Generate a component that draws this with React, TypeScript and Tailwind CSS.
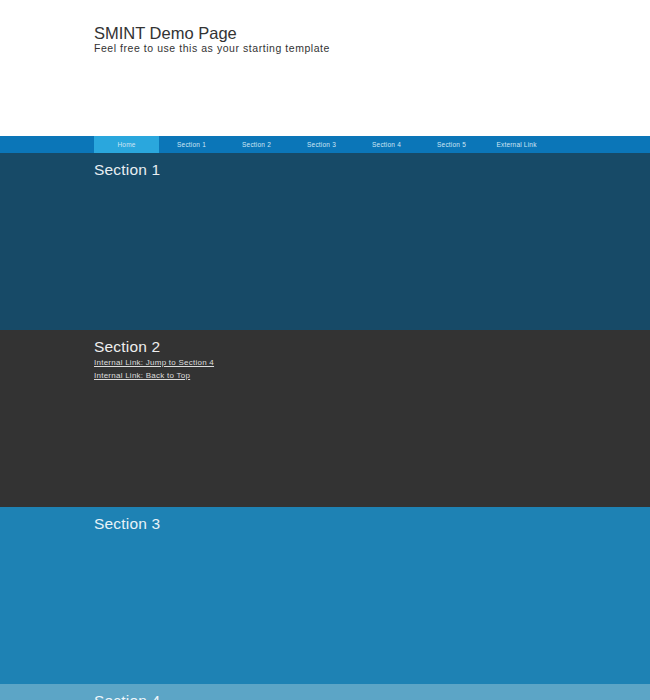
const navItems = [
  "Home",
  "Section 1",
  "Section 2",
  "Section 3",
  "Section 4",
  "Section 5",
  "External Link",
];

const font = { fontFamily: '"Liberation Sans", Arial, sans-serif' };

export default function App() {
  return (
    <div className="min-h-screen bg-white" style={font}>
      <header className="h-[136px] bg-white px-[94px] pt-[23px]">
        <h1 className="text-[16.5px] leading-[20px] text-[#333]">SMINT Demo Page</h1>
        <p className="-mt-[1px] text-[10.5px] leading-[12px] tracking-[0.55px] text-[#333]">
          Feel free to use this as your starting template
        </p>
      </header>

      <nav className="flex h-[17px] bg-[#0b76b8] px-[94px]">
        {navItems.map((item, i) => (
          <a
            key={item}
            href="#"
            className={`flex w-[65px] items-center justify-center text-[6.5px] tracking-[0.2px] text-[#cfe6f5] ${
              i === 0 ? "bg-[#2aa7dd]" : ""
            }`}
          >
            {item}
          </a>
        ))}
      </nav>

      <section className="h-[177px] bg-[#174a67] px-[94px] pt-[7px]">
        <h2 className="text-[15.5px] leading-[20px] tracking-[0.2px] text-[#e8eef2]">Section 1</h2>
      </section>

      <section className="h-[177px] bg-[#333333] px-[94px] pt-[7px]">
        <h2 className="text-[15.5px] leading-[20px] tracking-[0.2px] text-[#eee]">Section 2</h2>
        <div className="-mt-[1px] flex flex-col text-[8px] leading-[13px] tracking-[0.25px] text-[#ddd]">
          <a href="#" className="underline">Internal Link: Jump to Section 4</a>
          <a href="#" className="underline">Internal Link: Back to Top</a>
        </div>
      </section>

      <section className="h-[177px] bg-[#1e82b4] px-[94px] pt-[7px]">
        <h2 className="text-[15.5px] leading-[20px] tracking-[0.2px] text-[#e8f2f8]">Section 3</h2>
      </section>

      <section className="h-[177px] bg-[#5ca5c6] px-[94px] pt-[7px]">
        <h2 className="text-[15.5px] leading-[20px] tracking-[0.2px] text-[#eef6fa]">Section 4</h2>
      </section>
    </div>
  );
}
